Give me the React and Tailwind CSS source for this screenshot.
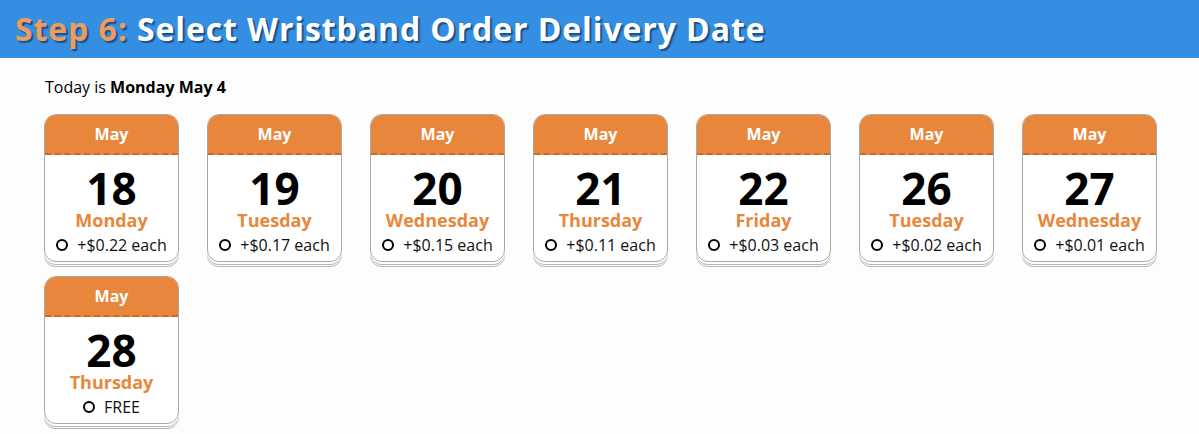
import React from "react";

const days = [
  { d: 18, w: "Monday", p: "+$0.22 each" },
  { d: 19, w: "Tuesday", p: "+$0.17 each" },
  { d: 20, w: "Wednesday", p: "+$0.15 each" },
  { d: 21, w: "Thursday", p: "+$0.11 each" },
  { d: 22, w: "Friday", p: "+$0.03 each" },
  { d: 26, w: "Tuesday", p: "+$0.02 each" },
  { d: 27, w: "Wednesday", p: "+$0.01 each" },
  { d: 28, w: "Thursday", p: "FREE" },
];

function Card({ d, w, p }) {
  return (
    <div className="w-[135px] rounded-[12px] border border-[#a9a9a9] bg-white overflow-hidden shadow-[0_2px_0_#fff,0_3px_0_#b5b5b5,0_4px_0_#fff,0_5px_0_#b5b5b5]">
      <div className="h-[40px] bg-[#e8873b] border-b-2 border-dashed border-[#c96a28] flex items-center justify-center text-white font-bold text-[16px] leading-[20px] pb-[1px]">
        May
      </div>
      <div className="flex flex-col items-center pt-[12px] pb-[5px]">
        <div className="text-[44px] leading-[42px] font-bold text-black">{d}</div>
        <div className="text-[18px] leading-[22px] font-bold text-[#e8873b]">{w}</div>
        <div className="flex items-center gap-[9px] text-[16px] leading-[22px] text-[#111] mt-[3px]">
          <span className="w-[12px] h-[12px] rounded-full border-2 border-black inline-block"></span>
          <span>{p}</span>
        </div>
      </div>
    </div>
  );
}

export default function App() {
  return (
    <div className="w-[1199px] h-[434px] bg-[#fdfdfd] font-['Open_Sans',sans-serif] overflow-hidden">
      <div className="h-[58px] bg-[#348fe3] flex items-center pl-[15px]">
        <h1 className="text-[32px] leading-[40px] font-bold tracking-[0.9px] text-white [text-shadow:2px_2px_1px_rgba(20,60,110,0.75)]">
          <span className="text-[#eb9c5f]">Step 6:</span> Select Wristband Order Delivery Date
        </h1>
      </div>
      <div className="pl-[45px] pt-[17px] text-[16px] leading-[24px] text-black">
        Today is <span className="font-bold">Monday May 4</span>
      </div>
      <div className="pl-[44px] pt-[15px] flex flex-wrap gap-x-[28px] gap-y-[14px] w-[1199px]">
        {days.map((x) => (
          <Card key={x.d} {...x} />
        ))}
      </div>
    </div>
  );
}
